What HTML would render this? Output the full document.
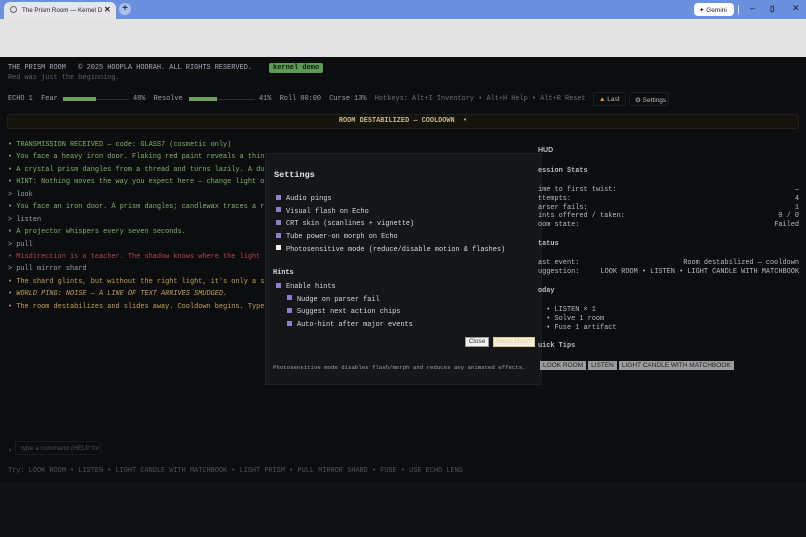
<!DOCTYPE html>
<html><head><meta charset="utf-8"><style>
*{margin:0;padding:0;box-sizing:border-box}
body{width:806px;height:537px;overflow:hidden;background:#0c0d0f;font-family:"Liberation Mono",monospace;font-size:6.9px;color:#9aa0a4;position:relative}
.a{position:absolute;white-space:nowrap}
.tabbar{position:absolute;left:0;top:0;width:806px;height:19px;background:#6b91de}
.tab{position:absolute;left:4px;top:2px;width:112px;height:17px;background:#e4e6ea;border-radius:6px 6px 0 0;font-family:"Liberation Sans",sans-serif;font-size:6.2px;color:#222;padding:5px 0 0 18px;overflow:hidden}
.toolbar{position:absolute;left:0;top:19px;width:806px;height:38px;background:#e3e3e3}
.track{position:absolute;height:1px;background:#2a2e30}
.log div{height:12.45px;line-height:12.45px}
.g{color:#7fb06a}.r{color:#b2474a}.y{color:#c0a05a}.c{color:#9aa0a4}
.modal{position:absolute;left:265px;top:153px;width:277px;height:232px;background:#141618;border:1px solid #1e2124}
.cb{display:inline-block;width:5px;height:5px;background:#8d7fd0;margin-right:5px;vertical-align:middle;position:relative;top:-1px}
.cw{background:#f0f0f0}
.h{color:#b8bcc0;z-index:2}
.hb{font-weight:bold}
</style></head><body>
<div class="tabbar">
 <div class="tab"><span style="position:absolute;left:6px;top:4px;width:7px;height:7px;border:1px solid #666;border-radius:50%"></span>The Prism Room — Kernel Der<span style="position:absolute;right:0;top:0;width:14px;height:17px;background:#e4e6ea;font-size:8px;font-weight:bold;padding:3px 0 0 2px">✕</span></div>
 <div class="a" style="left:119px;top:3px;width:12px;height:12px;border-radius:50%;background:#a9c0ef;color:#335;font:bold 10px 'Liberation Sans';text-align:center;line-height:12px">+</div>
 <div class="a" style="left:694px;top:3px;width:40px;height:13px;border-radius:4px;background:#fff;color:#222;font:6.5px 'Liberation Sans';padding:3px 0 0 5px">✦ Gemini</div>
 <div class="a" style="left:738px;top:5px;width:1px;height:9px;background:#dde"></div>
 <div class="a" style="left:750px;top:3px;color:#123;font:9px 'Liberation Sans'">–</div>
 <div class="a" style="left:770px;top:4px;color:#123;font:bold 8px 'Liberation Sans'">▯</div>
 <div class="a" style="left:792px;top:3px;color:#123;font:9px 'Liberation Sans'">✕</div>
</div>
<div class="toolbar"></div>

<div class="a" style="left:8px;top:64px;color:#aab">THE PRISM ROOM&nbsp;&nbsp;&nbsp;© 2025 HOOPLA HOORAH. ALL RIGHTS RESERVED.</div>
<div class="a" style="left:269px;top:63px;background:#5e9a55;color:#0c1a0c;font-weight:bold;padding:1px 4px;border-radius:2px;font-size:7px">kernel demo</div>
<div class="a" style="left:8px;top:74px;color:#5b5f63">Red was just the beginning.</div>

<div class="a" style="left:8px;top:95px">ECHO 1&nbsp;&nbsp;Fear</div>
<div class="track" style="left:63px;top:99px;width:66px"></div><div class="a" style="left:63px;top:97px;width:33px;height:4px;background:#6fa060"></div>
<div class="a" style="left:133px;top:95px">48%&nbsp;&nbsp;Resolve</div>
<div class="track" style="left:189px;top:99px;width:66px"></div><div class="a" style="left:189px;top:97px;width:28px;height:4px;background:#6fa060"></div>
<div class="a" style="left:259px;top:95px">41%&nbsp;&nbsp;Roll 00:00&nbsp;&nbsp;Curse 13%&nbsp;&nbsp;<span style="color:#6a6f73">Hotkeys: Alt+I Inventory • Alt+H Help • Alt+R Reset</span></div>
<div class="a" style="left:593px;top:92px;width:33px;height:14px;border:1px solid #1c1f22;border-radius:3px;font:6.5px 'Liberation Sans';color:#bbb;padding:3px 0 0 5px"><span style="color:#d9a830">▲</span> Last</div>
<div class="a" style="left:629px;top:92px;width:40px;height:14px;border:1px solid #1c1f22;border-radius:3px;font:6.5px 'Liberation Sans';color:#bbb;padding:3px 0 0 5px">⚙ Settings</div>

<div class="a" style="left:7px;top:114px;width:792px;height:15px;background:#14130e;border:1px solid #22201a;border-radius:3px;text-align:center;line-height:13px;color:#c8b487;font-weight:bold">ROOM DESTABILIZED — COOLDOWN&nbsp;&nbsp;•</div>

<div class="a log" style="left:8px;top:139px">
<div class="g">• TRANSMISSION RECEIVED — code: GLASS7 (cosmetic only)</div>
<div class="g">• You face a heavy iron door. Flaking red paint reveals a thin</div>
<div class="g">• A crystal prism dangles from a thread and turns lazily. A du</div>
<div class="g">• HINT: Nothing moves the way you expect here — change light o</div>
<div class="c">&gt; look</div>
<div class="g">• You face an iron door. A prism dangles; candlewax traces a r</div>
<div class="c">&gt; listen</div>
<div class="g">• A projector whispers every seven seconds.</div>
<div class="c">&gt; pull</div>
<div class="r">• Misdirection is a teacher. The shadow knows where the light</div>
<div class="c">&gt; pull mirror shard</div>
<div class="y">• The shard glints, but without the right light, it's only a s</div>
<div class="y" style="font-style:italic">• WORLD PING: NOISE — A LINE OF TEXT ARRIVES SMUDGED.</div>
<div class="y">• The room destabilizes and slides away. Cooldown begins. Type</div>
</div>

<div class="modal">
 <div class="a" style="left:8px;top:16px;font-weight:bold;font-size:8.5px;color:#e4e6e8">Settings</div>
 <div class="a" style="left:10px;top:39px;line-height:12.7px;color:#d8dadc;font-size:6.9px">
  <div><span class="cb"></span>Audio pings</div>
  <div><span class="cb"></span>Visual flash on Echo</div>
  <div><span class="cb"></span>CRT skin (scanlines + vignette)</div>
  <div><span class="cb"></span>Tube power-on morph on Echo</div>
  <div><span class="cb cw"></span>Photosensitive mode (reduce/disable motion &amp; flashes)</div>
 </div>
 <div class="a" style="left:7px;top:115px;font-weight:bold;color:#d8dadc">Hints</div>
 <div class="a" style="left:10px;top:127px;line-height:12.7px;color:#d8dadc;font-size:6.9px">
  <div><span class="cb"></span>Enable hints</div>
  <div style="padding-left:11px"><span class="cb"></span>Nudge on parser fail</div>
  <div style="padding-left:11px"><span class="cb"></span>Suggest next action chips</div>
  <div style="padding-left:11px"><span class="cb"></span>Auto-hint after major events</div>
 </div>
 <div class="a" style="left:199px;top:183px;width:24px;height:10px;background:#f2f2f2;border:1px solid #999;font:6.5px 'Liberation Sans';color:#333;text-align:center;line-height:8px">Close</div>
 <div class="a" style="left:227px;top:183px;width:42px;height:10px;background:#f2eed8;border:1px solid #d8c890;font:6.5px 'Liberation Sans';color:#e0d4b0;text-align:center;line-height:8px">Reset Room</div>
 <div class="a" style="left:7px;top:210px;color:#9aa0a4;font-size:5.7px">Photosensitive mode disables flash/morph and reduces any animated effects.</div>
</div>

<div class="a h" style="left:538px;top:147px;font:bold 7px 'Liberation Sans'">HUD</div>
<div class="a h hb" style="left:538px;top:167px">ession Stats</div>
<div class="a h" style="left:538px;top:186px;line-height:8.8px">ime to first twist:<br>ttempts:<br>arser fails:<br>ints offered / taken:<br>oom state:</div>
<div class="a h" style="right:7px;top:186px;text-align:right;line-height:8.8px">—<br>4<br>1<br>0 / 0<br>Failed</div>
<div class="a h hb" style="left:538px;top:240px">tatus</div>
<div class="a h" style="left:538px;top:259px;line-height:8.8px">ast event:<br>uggestion:</div>
<div class="a h" style="right:7px;top:259px;text-align:right;line-height:8.8px">Room destabilized — cooldown<br>LOOK ROOM • LISTEN • LIGHT CANDLE WITH MATCHBOOK</div>
<div class="a h hb" style="left:538px;top:287px">oday</div>
<div class="a h" style="left:538px;top:306px;line-height:8.8px">&nbsp;&nbsp;• LISTEN × 1<br>&nbsp;&nbsp;• Solve 1 room<br>&nbsp;&nbsp;• Fuse 1 artifact</div>
<div class="a h hb" style="left:538px;top:342px">uick Tips</div>
<div class="a h" style="left:540px;top:361px;font:6.5px 'Liberation Sans';color:#222">
<span style="background:#9a9c9e;padding:1px 3px;display:inline-block">LOOK ROOM</span><span style="background:#9a9c9e;padding:1px 3px;margin-left:2px;display:inline-block">LISTEN</span><span style="background:#9a9c9e;padding:1px 3px;margin-left:2px;display:inline-block">LIGHT CANDLE WITH MATCHBOOK</span></div>

<div class="a" style="left:8px;top:447px;color:#777">›</div>
<div class="a" style="left:15px;top:441px;width:86px;height:14px;border:1px solid #1a1d20;border-radius:2px;font:6.5px 'Liberation Sans';color:#4a4e52;padding:3px 0 0 5px">type a command (HELP for</div>
<div class="a" style="left:8px;top:467px;color:#4f5458">Try: LOOK ROOM • LISTEN • LIGHT CANDLE WITH MATCHBOOK • LIGHT PRISM • PULL MIRROR SHARD • FUSE • USE ECHO LENS</div>
<div class="a" style="left:0;top:481px;width:806px;height:56px;background:#101315"></div>
</body></html>
